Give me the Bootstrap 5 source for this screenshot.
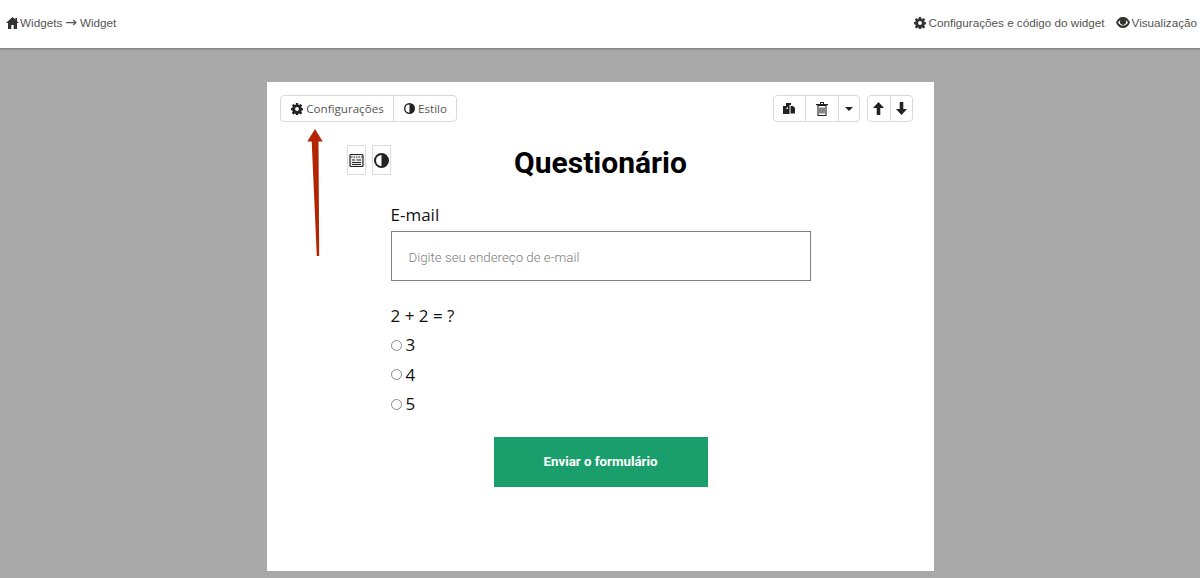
<!DOCTYPE html>
<html lang="pt">
<head>
    <meta charset="UTF-8">
    <meta name="viewport" content="width=device-width, initial-scale=1.0">
    <title>Widget</title>
    <link rel="stylesheet" href="https://cdn.jsdelivr.net/npm/bootstrap@5.3.0/dist/css/bootstrap.min.css">
    <style>
        html, body { height: 100%; }
        body {
            background: #a9a9a9;
            font-family: "Liberation Sans", Arial, sans-serif;
            overflow: hidden;
        }

        /* top bar */
        .top-bar {
            height: 48px;
            background: #fff;
            box-shadow: 0 1px 2px rgba(0, 0, 0, .3);
            padding: 0 3px 2px 6px;
            font-size: 11.7px;
            color: #555;
        }
        .top-bar svg { color: #333; display: block; }
        .top-link { gap: 2px; }
        .home-link { gap: 1px; }
        .gear-icon { margin-right: 1px; }
        .eye-link { margin-left: 11px; }
        .arrow-glyph { font-family: "DejaVu Sans", sans-serif; font-size: 14px; line-height: 1; margin: 0 3px; }

        /* canvas */
        .canvas-wrap { padding-top: 34px; }
        .sheet {
            width: 667px;
            height: 489px;
            background: #fff;
            margin: 0 auto;
            position: relative;
            padding: 13px 21px 0 13px;
        }

        /* toolbar */
        .tool-group { height: 27px; }
        .tool-group .btn {
            font-family: "Open Sans", sans-serif;
            font-size: 11.6px;
            line-height: 1;
            color: #555;
            background: #fff;
            border-color: #d9d9d9;
            padding: 0;
            display: flex;
            align-items: center;
            justify-content: center;
            gap: 3px;
            border-radius: 4px;
        }
        .tool-group svg { color: #222; display: block; }
        .tool-groups-right { gap: 7px; }
        .tool-group .btn-config { width: 114px; padding-left: 2px; }
        .tool-group .btn-style { width: 64px; padding-left: 2px; }
        .btn-copy { width: 33px; }
        .btn-trash { width: 34px; }
        .btn-more { width: 22px; }
        .btn-up { width: 24px; }
        .btn-down { width: 23px; }
        .caret-down {
            width: 0; height: 0;
            border-left: 4px solid transparent;
            border-right: 4px solid transparent;
            border-top: 4px solid #222;
        }

        /* floating widget handles */
        .handle {
            position: absolute;
            top: 63px;
            width: 19px;
            height: 30px;
            border: 1px solid #ddd;
            background: #fff;
            display: flex;
            align-items: center;
            justify-content: center;
        }
        .handle svg { display: block; }
        .handle-form { left: 80px; }
        .handle-style { left: 105px; }

        .red-arrow { position: absolute; left: 32px; top: 47px; }

        /* form */
        .quiz {
            width: 420px;
            margin: 0 auto;
            position: relative;
            left: 4.5px;
            font-family: "Open Sans", sans-serif;
            font-size: 17px;
            color: #111;
        }
        .quiz-title {
            font-family: Roboto, sans-serif;
            font-weight: 700;
            font-size: 30px;
            line-height: 34px;
            color: #000;
            text-align: center;
            margin: 24px 0 24px;
        }
        .quiz-label { line-height: 22px; margin-bottom: 5px; }
        .quiz-input {
            height: 50px;
            border: 1px solid #808080;
            border-radius: 0;
            padding: 2px 17px 0;
            font-size: 13.3px;
            font-family: Roboto, sans-serif;
            font-weight: 300;
            margin-bottom: 24px;
        }
        .quiz-input::placeholder { color: #808080; opacity: 1; }
        .quiz-gap { margin-bottom: 3px; }
        .quiz-option {
            height: 29.5px;
            display: flex;
            align-items: center;
            gap: 4px;
        }
        .quiz-option input {
            appearance: none;
            width: 11px;
            height: 11px;
            margin: 1px 0 0;
            border: 1px solid #8a8a8a;
            border-radius: 50%;
            background: #fff;
        }
        .quiz-submit {
            display: block;
            width: 214px;
            height: 50px;
            margin: 18px auto 0;
            padding: 1px 0 0;
            border: 0;
            border-radius: 0;
            background: #1a9f6c;
            color: #fff;
            font-family: Roboto, sans-serif;
            font-weight: 700;
            font-size: 13.3px;
        }
    </style>
</head>
<body>
    <!-- Top bar -->
    <div class="top-bar d-flex align-items-center justify-content-between">
        <div class="d-flex align-items-center home-link">
            <svg width="13" height="12" viewBox="0 0 13 12"><path fill="currentColor" d="M6.500 0 0 6h2v6h3.300V8h2.400v4H11V6h2l-2-1.850V1H9.300v1.600z"/></svg>
            <span>Widgets<span class="arrow-glyph">→</span>Widget</span>
        </div>
        <div class="d-flex align-items-center">
            <div class="d-flex align-items-center top-link">
                <svg class="gear-icon" width="12" height="12" viewBox="0 0 16 16"><path fill="currentColor" fill-rule="evenodd" d="M6.600 0h2.800l.4 2.200 1.200.5 1.900-1.300 2 2-1.300 1.900.5 1.200 2.200.4v2.800l-2.200.4-.5 1.200 1.300 1.900-2 2-1.900-1.300-1.200.5-.4 2.200H6.600l-.4-2.200-1.200-.5-1.900 1.300-2-2 1.300-1.900-.5-1.200-2.200-.4V6.700l2.200-.4.5-1.200-1.300-1.900 2-2L5 2.700l1.200-.5zM8 5.400a2.600 2.600 0 1 0 0 5.200 2.600 2.600 0 0 0 0-5.200z"/></svg>
                <span>Configurações e código do widget</span>
            </div>
            <div class="d-flex align-items-center top-link eye-link">
                <svg width="14" height="11" viewBox="0 0 14 11"><path fill="currentColor" fill-rule="evenodd" d="M7 0C3.800 0 1.200 2 0 5.500 1.200 9 3.800 11 7 11s5.800-2 7-5.500C12.800 2 10.200 0 7 0zM2 5.500C2.700 4.400 3.500 3.500 4.500 2.900a3.100 3.100 0 1 0 5 0c1 .6 1.800 1.500 2.500 2.600-1.200 2-2.900 3.100-5 3.100S3.200 7.500 2 5.500z"/></svg>
                <span>Visualização</span>
            </div>
        </div>
    </div>

    <!-- Canvas -->
    <div class="canvas-wrap">
        <div class="sheet">
            <div class="d-flex justify-content-between">
                <div class="btn-group tool-group">
                    <button class="btn btn-config" type="button">
                        <svg width="12" height="12" viewBox="0 0 16 16"><path fill="currentColor" fill-rule="evenodd" d="M6.600 0h2.800l.4 2.200 1.200.5 1.900-1.300 2 2-1.300 1.900.5 1.200 2.200.4v2.800l-2.200.4-.5 1.200 1.300 1.900-2 2-1.900-1.300-1.200.5-.4 2.200H6.600l-.4-2.200-1.200-.5-1.900 1.300-2-2 1.300-1.900-.5-1.200-2.200-.4V6.700l2.200-.4.5-1.200-1.300-1.900 2-2L5 2.700l1.200-.5zM8 5.400a2.600 2.600 0 1 0 0 5.200 2.600 2.600 0 0 0 0-5.200z"/></svg>
                        Configurações
                    </button>
                    <button class="btn btn-style" type="button">
                        <svg width="11" height="11" viewBox="0 0 12 12"><path fill="currentColor" fill-rule="evenodd" d="M6 0a6 6 0 1 0 0 12A6 6 0 0 0 6 0zm0 1.500v9a4.500 4.500 0 0 1 0-9z"/></svg>
                        Estilo
                    </button>
                </div>
                <div class="d-flex tool-groups-right">
                    <div class="btn-group tool-group">
                        <button class="btn btn-copy" type="button" aria-label="Copiar">
                            <svg width="12" height="11" viewBox="0 0 12 11"><path fill="currentColor" d="M0 3h3V0h5v2H6.500v9H0zM8 3h2l2 2v5.500H7.500V3z"/><path fill="#fff" d="M3.500 4.500H5V6H3.500z"/></svg>
                        </button>
                        <button class="btn btn-trash" type="button" aria-label="Excluir">
                            <svg width="12" height="14" viewBox="0 0 12 14"><path fill="none" stroke="currentColor" stroke-width="1.100" d="M2 3.500h8V13.500H2zM4 5.500v6M6 5.500v6M8 5.500v6"/><path fill="currentColor" d="M0 2h12v1.300H0zM4 0h4v2H7V1H5v1H4z"/></svg>
                        </button>
                        <button class="btn btn-more" type="button" aria-label="Mais"><span class="caret-down"></span></button>
                    </div>
                    <div class="btn-group tool-group">
                        <button class="btn btn-up" type="button" aria-label="Subir">
                            <svg width="11" height="13" viewBox="0 0 11 13"><path fill="currentColor" d="M5.500 0 11 6H7.300v7H3.700V6H0z"/></svg>
                        </button>
                        <button class="btn btn-down" type="button" aria-label="Descer">
                            <svg width="11" height="13" viewBox="0 0 11 13"><path fill="currentColor" d="M5.500 13 11 7H7.300V0H3.700v7H0z"/></svg>
                        </button>
                    </div>
                </div>
            </div>

            <svg class="red-arrow" width="32" height="128" viewBox="0 0 32 128"><path fill="#b32400" d="M16 0 23.700 12.500H19.500L20.200 127H17.800L12.700 12.500H8.300z"/></svg>

            <div class="handle handle-form">
                <svg width="15" height="15" viewBox="0 0 15 15"><rect x="1" y="1.500" width="13" height="12" rx="1" fill="#eee" stroke="#222" stroke-width="1.200"/><path stroke="#222" stroke-dasharray="1.500 1" d="M2 4h11"/><path stroke="#222" d="M3 7h3M7.500 7h4.500M3 9.500h9M3 11.500h9"/></svg>
            </div>
            <div class="handle handle-style">
                <svg width="15" height="15" viewBox="0 0 15 15"><path fill="#222" fill-rule="evenodd" d="M7.500 0a7.500 7.500 0 1 0 0 15 7.500 7.500 0 0 0 0-15zm0 2v11a5.500 5.500 0 0 1 0-11z"/></svg>
            </div>

            <!-- Form -->
            <div class="quiz">
                <h1 class="quiz-title">Questionário</h1>
                <div class="quiz-label">E-mail</div>
                <input class="form-control quiz-input" type="text" placeholder="Digite seu endereço de e-mail">
                <div class="quiz-label quiz-gap">2 + 2 = ?</div>
                <label class="quiz-option"><input type="radio" name="q"> 3</label>
                <label class="quiz-option"><input type="radio" name="q"> 4</label>
                <label class="quiz-option"><input type="radio" name="q"> 5</label>
                <button class="btn quiz-submit" type="button">Enviar o formulário</button>
            </div>
        </div>
    </div>
    <script src="https://cdn.jsdelivr.net/npm/bootstrap@5.3.0/dist/js/bootstrap.bundle.min.js"></script>
</body>
</html>
